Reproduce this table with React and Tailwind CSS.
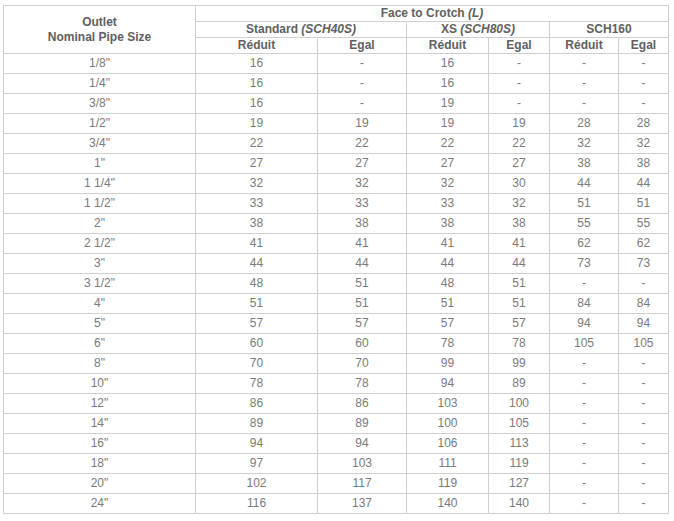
import React from 'react'

const rows = [
  ['1/8"', '16', '-', '16', '-', '-', '-'],
  ['1/4"', '16', '-', '16', '-', '-', '-'],
  ['3/8"', '16', '-', '19', '-', '-', '-'],
  ['1/2"', '19', '19', '19', '19', '28', '28'],
  ['3/4"', '22', '22', '22', '22', '32', '32'],
  ['1"', '27', '27', '27', '27', '38', '38'],
  ['1 1/4"', '32', '32', '32', '30', '44', '44'],
  ['1 1/2"', '33', '33', '33', '32', '51', '51'],
  ['2"', '38', '38', '38', '38', '55', '55'],
  ['2 1/2"', '41', '41', '41', '41', '62', '62'],
  ['3"', '44', '44', '44', '44', '73', '73'],
  ['3 1/2"', '48', '51', '48', '51', '-', '-'],
  ['4"', '51', '51', '51', '51', '84', '84'],
  ['5"', '57', '57', '57', '57', '94', '94'],
  ['6"', '60', '60', '78', '78', '105', '105'],
  ['8"', '70', '70', '99', '99', '-', '-'],
  ['10"', '78', '78', '94', '89', '-', '-'],
  ['12"', '86', '86', '103', '100', '-', '-'],
  ['14"', '89', '89', '100', '105', '-', '-'],
  ['16"', '94', '94', '106', '113', '-', '-'],
  ['18"', '97', '103', '111', '119', '-', '-'],
  ['20"', '102', '117', '119', '127', '-', '-'],
  ['24"', '116', '137', '140', '140', '-', '-'],
]

const th = 'border border-[#d0d0d0] p-0 font-bold text-[#606060] text-center leading-[15px] h-[16px]'
const td = 'border border-[#d0d0d0] p-0 text-center h-[20px] leading-[19px]'

export default function App() {
  return (
    <div className="bg-white w-[674px] h-[521px] pt-[5px] pl-[3px]" style={{ fontFamily: '"Liberation Sans", Arial, sans-serif' }}>
      <table className="table-fixed border-collapse text-[12px] text-[#7a7a7a] w-[665px]">
        <colgroup>
          <col className="w-[192px]" />
          <col className="w-[122px]" />
          <col className="w-[89px]" />
          <col className="w-[82px]" />
          <col className="w-[61px]" />
          <col className="w-[69px]" />
          <col className="w-[50px]" />
        </colgroup>
        <thead>
          <tr>
            <th rowSpan={3} className={th}>Outlet<br />Nominal Pipe Size</th>
            <th colSpan={6} className={th}>Face to Crotch <i>(L)</i></th>
          </tr>
          <tr>
            <th colSpan={2} className={th}>Standard <i>(SCH40S)</i></th>
            <th colSpan={2} className={th}>XS <i>(SCH80S)</i></th>
            <th colSpan={2} className={th}>SCH160</th>
          </tr>
          <tr>
            <th className={th}>Réduit</th>
            <th className={th}>Egal</th>
            <th className={th}>Réduit</th>
            <th className={th}>Egal</th>
            <th className={th}>Réduit</th>
            <th className={th}>Egal</th>
          </tr>
        </thead>
        <tbody>
          {rows.map((r) => (
            <tr key={r[0]}>
              {r.map((c, i) => (
                <td key={i} className={td}>{c}</td>
              ))}
            </tr>
          ))}
        </tbody>
      </table>
    </div>
  )
}
